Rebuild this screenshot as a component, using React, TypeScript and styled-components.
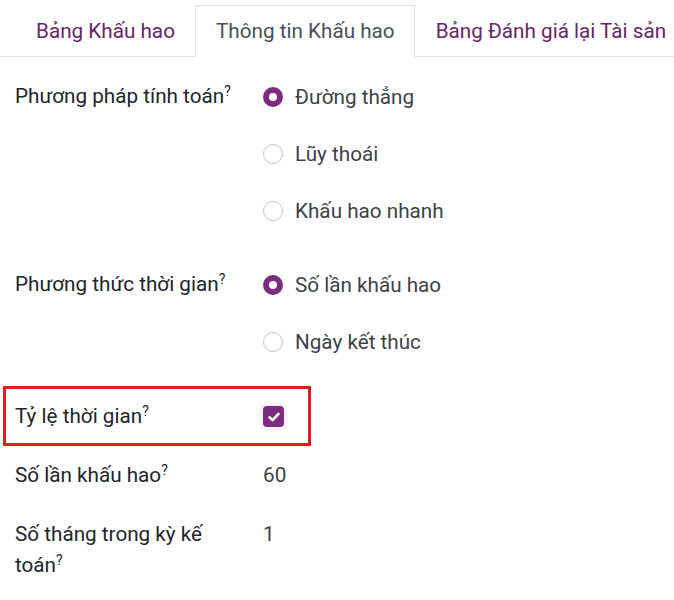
import { FC } from "react";
import styled, { createGlobalStyle } from "styled-components";

const PURPLE = "#7d2b80";

const GlobalStyle = createGlobalStyle`
  html, body {
    margin: 0;
    padding: 0;
    background: #ffffff;
  }
  body {
    font-family: Roboto, "Noto Sans", "DejaVu Sans", sans-serif;
    color: #212529;
  }
`;

const Page = styled.div`
  width: 674px;
  height: 600px;
  overflow: hidden;
  padding-top: 5px;
  box-sizing: border-box;
`;

const TabBar = styled.nav`
  display: flex;
  padding-left: 15px;
  border-bottom: 1px solid #dee2e6;
  white-space: nowrap;
`;

const Tab = styled.div<{ $active?: boolean }>`
  height: 50px;
  display: flex;
  align-items: center;
  padding: 0 19px 0 20px;
  font-size: 20.7px;
  margin-bottom: -1px;
  border: 1px solid ${(p) => (p.$active ? "#dee2e6" : "transparent")};
  border-bottom-color: ${(p) => (p.$active ? "#ffffff" : "transparent")};
  background: ${(p) => (p.$active ? "#ffffff" : "transparent")};
  color: ${(p) => (p.$active ? "#495057" : "#6a2468")};
`;

const Sheet = styled.div`
  padding: 11px 0 0 15px;
  display: flex;
  flex-direction: column;
`;

const Field = styled.div<{ $highlight?: boolean; $gap?: number }>`
  position: relative;
  display: grid;
  grid-template-columns: 248px 1fr;
  margin-top: ${(p) => p.$gap ?? 0}px;
  ${(p) =>
    p.$highlight &&
    `
    &::after {
      content: "";
      position: absolute;
      left: -12px;
      top: -2px;
      bottom: -1px;
      width: 308px;
      border: 3px solid #e11d1d;
      box-sizing: border-box;
      pointer-events: none;
    }
  `}
`;

const Label = styled.div`
  font-size: 20.7px;
  line-height: 31px;
  padding: 13px 20px 13px 0;
  color: #212529;
`;

const Help = styled.sup`
  font-size: 14px;
  line-height: 0;
  vertical-align: 7px;
`;

const Options = styled.div`
  display: flex;
  flex-direction: column;
`;

const Option = styled.div`
  height: 57px;
  display: flex;
  align-items: center;
  gap: 12px;
  font-size: 20.7px;
  color: #3c4248;
`;

const Radio = styled.span<{ $checked?: boolean }>`
  width: 20px;
  height: 20px;
  border-radius: 50%;
  box-sizing: border-box;
  flex: none;
  border: ${(p) => (p.$checked ? `6px solid ${PURPLE}` : "1px solid #bfc3c7")};
  background: #ffffff;
`;

const Value = styled.div`
  display: flex;
  align-items: flex-start;
  padding: 13px 0;
  font-size: 20.7px;
  line-height: 31px;
  color: #3c4248;
`;

const CheckCell = styled.div`
  display: flex;
  align-items: center;
  height: 57px;
`;

const Checkbox = styled.span`
  width: 21px;
  height: 21px;
  border-radius: 4px;
  background: ${PURPLE};
  display: flex;
  align-items: center;
  justify-content: center;
  box-shadow: 0 0 0 4px rgba(125, 43, 128, 0.05);
`;

const CheckMark: FC = () => (
  <svg width="14" height="14" viewBox="0 0 14 14">
    <path
      d="M2.6 7.4 L5.6 10.1 L11.4 4"
      fill="none"
      stroke="#fff"
      strokeWidth="2.6"
      strokeLinecap="round"
      strokeLinejoin="round"
    />
  </svg>
);

const FieldLabel: FC<{ text: string }> = ({ text }) => (
  <Label>
    {text}
    <Help>?</Help>
  </Label>
);

const methodOptions = [
  { label: "Đường thẳng", checked: true },
  { label: "Lũy thoái", checked: false },
  { label: "Khấu hao nhanh", checked: false },
];

const timeOptions = [
  { label: "Số lần khấu hao", checked: true },
  { label: "Ngày kết thúc", checked: false },
];

const App: FC = () => {
  return (
    <Page>
      <GlobalStyle />
      <TabBar>
        <Tab>Bảng Khấu hao</Tab>
        <Tab $active>Thông tin Khấu hao</Tab>
        <Tab>Bảng Đánh giá lại Tài sản</Tab>
      </TabBar>
      <Sheet>
        <Field>
          <FieldLabel text="Phương pháp tính toán" />
          <Options>
            {methodOptions.map((o) => (
              <Option key={o.label}>
                <Radio $checked={o.checked} />
                {o.label}
              </Option>
            ))}
          </Options>
        </Field>
        <Field $gap={17}>
          <FieldLabel text="Phương thức thời gian" />
          <Options>
            {timeOptions.map((o) => (
              <Option key={o.label}>
                <Radio $checked={o.checked} />
                {o.label}
              </Option>
            ))}
          </Options>
        </Field>
        <Field $gap={18} $highlight>
          <FieldLabel text="Tỷ lệ thời gian" />
          <CheckCell>
            <Checkbox>
              <CheckMark />
            </Checkbox>
          </CheckCell>
        </Field>
        <Field $gap={2}>
          <FieldLabel text="Số lần khấu hao" />
          <Value>60</Value>
        </Field>
        <Field $gap={2}>
          <FieldLabel text="Số tháng trong kỳ kế toán" />
          <Value>1</Value>
        </Field>
      </Sheet>
    </Page>
  );
};

export default App;
